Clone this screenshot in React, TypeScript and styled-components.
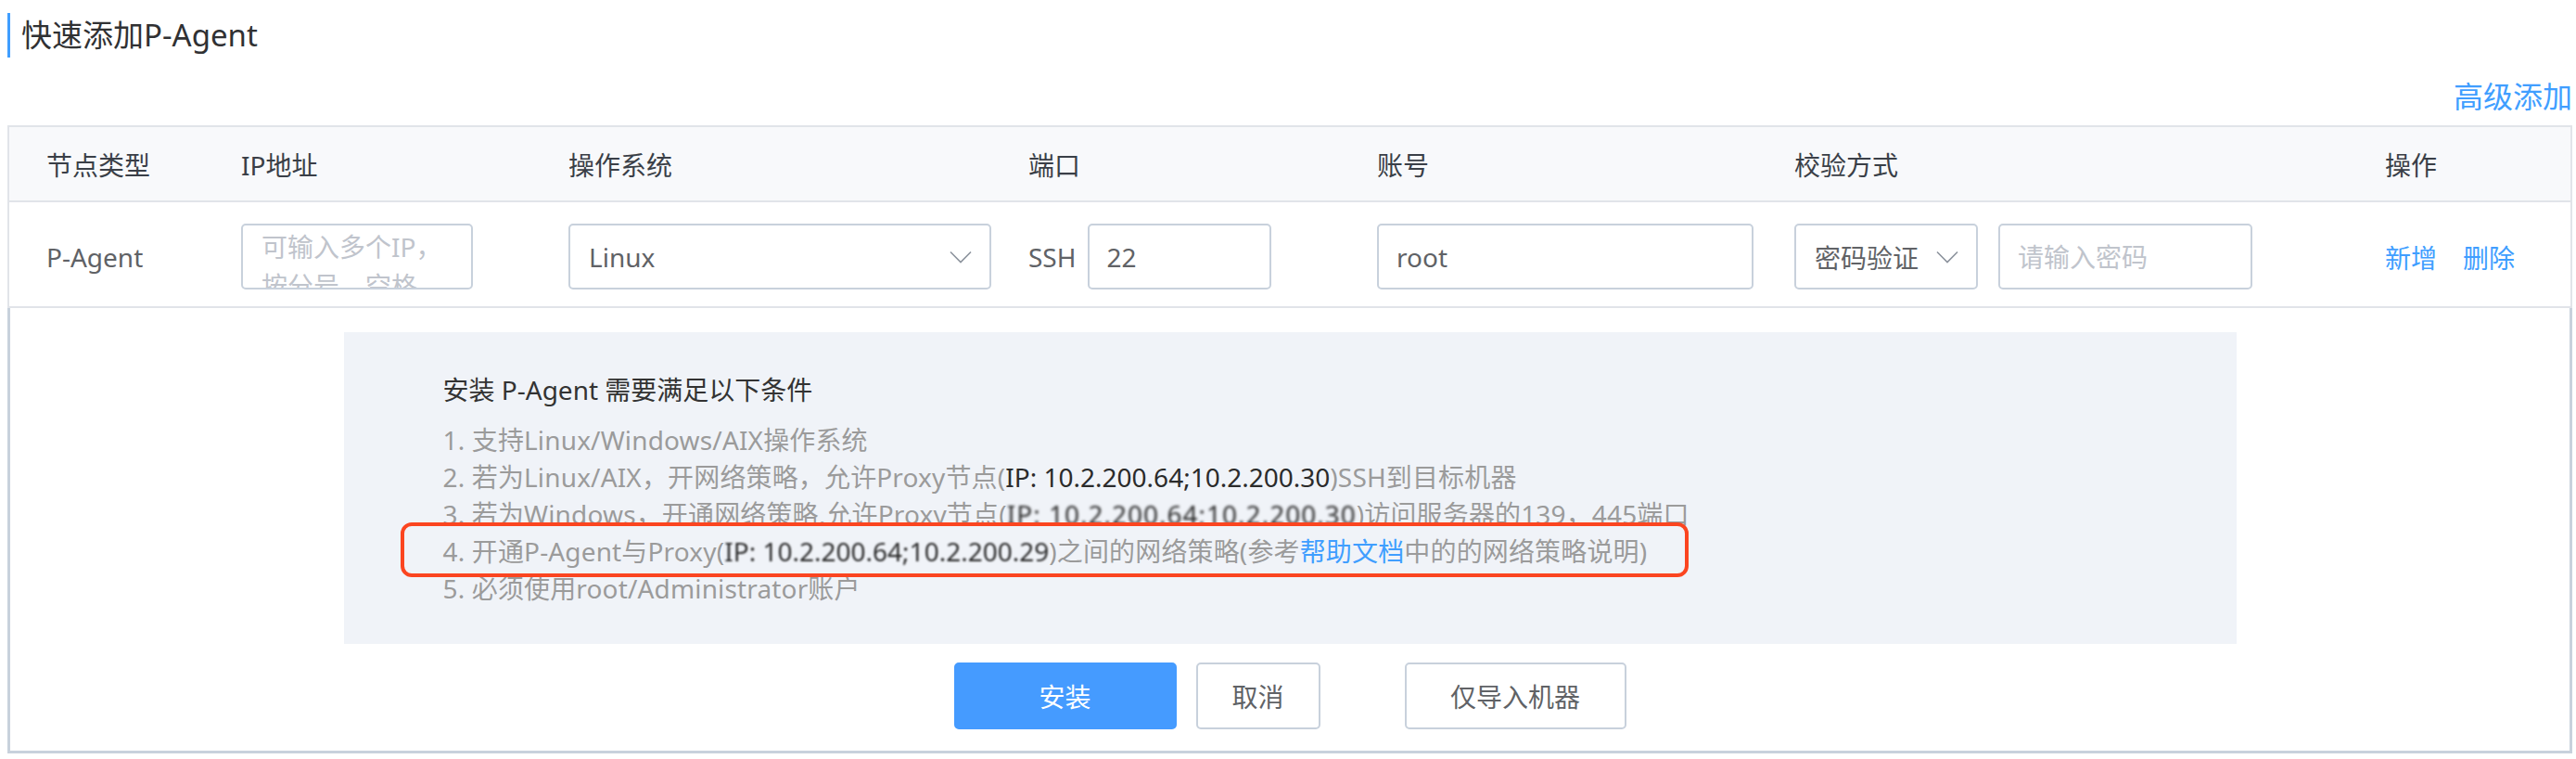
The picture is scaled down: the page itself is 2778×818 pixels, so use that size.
import React from "react";
import styled, { createGlobalStyle } from "styled-components";

const GlobalStyle = createGlobalStyle`
  html, body { margin: 0; padding: 0; background: #ffffff; }
  body {
    font-family: "Noto Sans", "Noto Sans CJK SC", sans-serif;
    -webkit-font-smoothing: antialiased;
  }
  * { box-sizing: border-box; }
`;

const Page = styled.div`
  width: 2778px;
  padding: 14px 4px 0 8px;
`;

const Title = styled.h2`
  margin: 0;
  height: 48px;
  line-height: 48px;
  border-left: 3px solid #409eff;
  padding-left: 12px;
  font-size: 33px;
  font-weight: 400;
  color: #303133;
`;

const AdvRow = styled.div`
  display: flex;
  justify-content: flex-end;
  margin-top: 18px;
  height: 48px;
  line-height: 48px;
`;

const Link = styled.a<{ $size?: number }>`
  color: #409eff;
  font-size: ${(p) => p.$size ?? 28}px;
  text-decoration: none;
  cursor: pointer;
`;

const Table = styled.div`
  margin-top: 7px;
`;

const COLS = "210px 353px 496px 376px 450px 637px 1fr";

const HeadRow = styled.div`
  display: grid;
  grid-template-columns: ${COLS};
  align-items: center;
  height: 83px;
  padding-left: 40px;
  background: #f8f9fb;
  border: 2px solid #e1e4e9;
  font-size: 28px;
  color: #3a3f47;
`;

const DataRow = styled.div`
  display: grid;
  grid-template-columns: ${COLS};
  align-items: center;
  height: 114px;
  padding: 5px 0 0 40px;
  border: 2px solid #e1e4e9;
  border-top: none;
  font-size: 28px;
  color: #606266;
`;

const Cell = styled.div<{ $gap?: number }>`
  display: flex;
  align-items: center;
  gap: ${(p) => p.$gap ?? 0}px;
`;

const fieldBase = `
  height: 71px;
  border: 2px solid #c8d1dc;
  border-radius: 5px;
  background: #ffffff;
  font-family: inherit;
  font-size: 28px;
  color: #606266;
  outline: none;
`;

const TextInput = styled.input<{ $w: number }>`
  ${fieldBase}
  width: ${(p) => p.$w}px;
  padding: 0 19px;
  &::placeholder { color: #c0c4cc; }
`;

const IpArea = styled.textarea`
  ${fieldBase}
  width: 250px;
  padding: 2px 20px;
  line-height: 42px;
  resize: none;
  overflow: hidden;
  &::placeholder { color: #c0c4cc; }
`;

const SelectBox = styled.div<{ $w: number }>`
  ${fieldBase}
  width: ${(p) => p.$w}px;
  display: flex;
  align-items: center;
  justify-content: space-between;
  padding: 0 19px 0 20px;
`;

const Chevron = () => (
  <svg width="24" height="14" viewBox="0 0 24 14" fill="none">
    <path d="M1 1.5 L12 12.5 L23 1.5" stroke="#8c939d" strokeWidth="1.6" />
  </svg>
);

const Select = ({ value, w }: { value: string; w: number }) => (
  <SelectBox $w={w}>
    <span>{value}</span>
    <Chevron />
  </SelectBox>
);

const Expand = styled.div`
  border: 3px solid #c8d1dc;
  border-top: none;
  padding: 26px 0 23px;
`;

const Notice = styled.div`
  width: 2041px;
  height: 336px;
  margin: 0 auto;
  background: #f0f3f8;
  padding: 42px 0 0 107px;
  font-size: 28px;
`;

const NoticeTitle = styled.div`
  line-height: 40px;
  color: #333333;
  margin-bottom: 14px;
`;

const Line = styled.div`
  line-height: 40px;
  color: #9b9b9b;
  white-space: nowrap;
  letter-spacing: 0.15px;
`;

const Ip = styled.span<{ $blur?: number; $spread?: number }>`
  color: #2b2b2b;
  letter-spacing: ${(p) => p.$spread ?? 0}px;
  filter: ${(p) => (p.$blur ? `blur(${p.$blur}px)` : "none")};
`;

const Highlight = styled.span`
  position: relative;
  z-index: 0;
  display: inline-block;
  &::before {
    content: "";
    position: absolute;
    top: -11px;
    bottom: -8px;
    left: -46px;
    right: -45px;
    border: 4px solid #fb4520;
    border-radius: 12px;
    background: #f0f3f8;
    z-index: -1;
  }
`;

const Actions = styled.div`
  display: flex;
  justify-content: center;
  margin-top: 20px;
`;

const Button = styled.button<{ $primary?: boolean; $w: number; $mr?: number }>`
  width: ${(p) => p.$w}px;
  height: 72px;
  margin-right: ${(p) => p.$mr ?? 0}px;
  border-radius: 5px;
  border: 2px solid ${(p) => (p.$primary ? "#459bff" : "#c8d1dc")};
  background: ${(p) => (p.$primary ? "#459bff" : "#ffffff")};
  color: ${(p) => (p.$primary ? "#ffffff" : "#606266")};
  font-family: inherit;
  font-size: 28px;
  cursor: pointer;
`;

export default function App() {
  return (
    <>
      <GlobalStyle />
      <Page>
        <Title>快速添加P-Agent</Title>
        <AdvRow>
          <Link $size={32}>高级添加</Link>
        </AdvRow>
        <Table>
          <HeadRow>
            <div>节点类型</div>
            <div>IP地址</div>
            <div>操作系统</div>
            <div>端口</div>
            <div>账号</div>
            <div>校验方式</div>
            <div>操作</div>
          </HeadRow>
          <DataRow>
            <Cell>P-Agent</Cell>
            <Cell>
              <IpArea placeholder="可输入多个IP，按分号、空格、换行分隔" />
            </Cell>
            <Cell>
              <Select value="Linux" w={456} />
            </Cell>
            <Cell $gap={12}>
              <span>SSH</span>
              <TextInput $w={198} defaultValue="22" />
            </Cell>
            <Cell>
              <TextInput $w={406} defaultValue="root" />
            </Cell>
            <Cell $gap={22}>
              <Select value="密码验证" w={198} />
              <TextInput $w={274} placeholder="请输入密码" type="text" />
            </Cell>
            <Cell $gap={28}>
              <Link>新增</Link>
              <Link>删除</Link>
            </Cell>
          </DataRow>
          <Expand>
            <Notice>
              <NoticeTitle>安装 P-Agent 需要满足以下条件</NoticeTitle>
              <Line>1. 支持Linux/Windows/AIX操作系统</Line>
              <Line>
                2. 若为Linux/AIX，开网络策略，允许Proxy节点(<Ip>IP: 10.2.200.64;10.2.200.30</Ip>)SSH到目标机器
              </Line>
              <Line>
                3. 若为Windows，开通网络策略,允许Proxy节点(<Ip $blur={1.4} $spread={1}>IP: 10.2.200.64;10.2.200.30</Ip>)访问服务器的139，445端口
              </Line>
              <Line>
                <Highlight>
                  4. 开通P-Agent与Proxy(<Ip $blur={0.8}>IP: 10.2.200.64;10.2.200.29</Ip>)之间的网络策略(参考<Link>帮助文档</Link>中的的网络策略说明)
                </Highlight>
              </Line>
              <Line>5. 必须使用root/Administrator账户</Line>
            </Notice>
            <Actions>
              <Button $primary $w={240} $mr={21}>安装</Button>
              <Button $w={134} $mr={91}>取消</Button>
              <Button $w={239}>仅导入机器</Button>
            </Actions>
          </Expand>
        </Table>
      </Page>
    </>
  );
}
